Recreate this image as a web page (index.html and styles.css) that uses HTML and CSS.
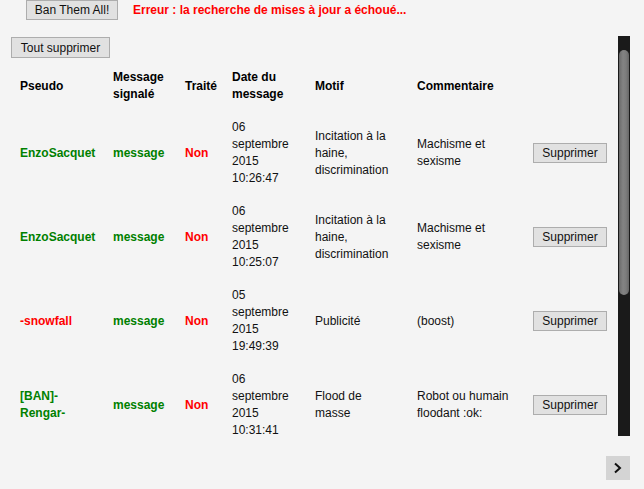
FILE: index.html
```html
<!DOCTYPE html>
<html lang="fr">
<head>
<meta charset="utf-8">
<title>Messages signalés</title>
<link rel="stylesheet" href="styles.css">
</head>
<body>
<div class="topbar">
  <button class="btn btn-ban">Ban Them All!</button>
  <span class="error">Erreur : la recherche de mises à jour a échoué...</span>
</div>
<div class="viewport">
  <div class="panel">
    <div class="actions"><button class="btn btn-all">Tout supprimer</button></div>
    <table class="reports">
      <colgroup>
        <col class="c-pseudo"><col class="c-msg"><col class="c-done"><col class="c-date"><col class="c-motif"><col class="c-comment"><col class="c-action">
      </colgroup>
      <thead>
        <tr><th>Pseudo</th><th>Message signalé</th><th>Traité</th><th>Date du message</th><th>Motif</th><th>Commentaire</th><th></th></tr>
      </thead>
      <tbody>
        <tr><td class="ok">EnzoSacquet</td><td class="ok">message</td><td class="no">Non</td><td>06 septembre 2015 10:26:47</td><td class="motif">Incitation à la haine, discrimination</td><td>Machisme et sexisme</td><td><button class="btn">Supprimer</button></td></tr>
        <tr><td class="ok">EnzoSacquet</td><td class="ok">message</td><td class="no">Non</td><td>06 septembre 2015 10:25:07</td><td class="motif">Incitation à la haine, discrimination</td><td>Machisme et sexisme</td><td><button class="btn">Supprimer</button></td></tr>
        <tr><td class="no">-snowfall</td><td class="ok">message</td><td class="no">Non</td><td>05 septembre 2015 19:49:39</td><td class="motif">Publicité</td><td>(boost)</td><td><button class="btn">Supprimer</button></td></tr>
        <tr><td class="ok">[BAN]-Rengar-</td><td class="ok">message</td><td class="no">Non</td><td>06 septembre 2015 10:31:41</td><td class="motif">Flood de masse</td><td>Robot ou humain floodant :ok:</td><td><button class="btn">Supprimer</button></td></tr>
      </tbody>
    </table>
  </div>
  <div class="scrollbar"><div class="thumb"></div></div>
</div>
<div class="pager">
  <button class="next" aria-label="Suivant"><svg width="24" height="24" viewBox="0 0 24 24"><path d="M9 7.5 L14 12 L9 16.5" fill="none" stroke="#111" stroke-width="2"/></svg></button>
</div>
</body>
</html>
```

FILE: styles.css
```css
html, body {
  margin: 0;
  background: #f4f4f4;
  font-family: "Liberation Sans", Arial, sans-serif;
  font-size: 12px;
  color: #111;
}
.btn {
  font-family: "Liberation Sans", Arial, sans-serif;
  font-size: 12px;
  color: #111;
  background: #e1e1e1;
  border: 1px solid #adadad;
  border-radius: 0;
  height: 20px;
  padding: 0 6px;
  margin: 0;
  line-height: 18px;
}
.topbar {
  display: flex;
  align-items: center;
  gap: 15px;
  padding-left: 26px;
  height: 20px;
}
.btn-ban {
  width: 92px;
  margin-top: -1px;
}
.error {
  color: #ff0000;
  font-weight: bold;
}
.viewport {
  margin-top: 16px;
  width: 630px;
  height: 400px;
  display: flex;
}
.panel {
  flex: 1;
  overflow: hidden;
  padding: 1px 0 0 11px;
}
.scrollbar {
  width: 12px;
  background: #1a1a1a;
  display: flex;
  flex-direction: column;
  padding: 14px 1px 0 1px;
  box-sizing: border-box;
}
.thumb {
  height: 245px;
  border-radius: 5px;
  background: linear-gradient(to right, #6a6a6a, #838383 40%, #7c7c7c 70%, #666);
}
.actions {
  display: flex;
}
.btn-all {
  width: 99px;
  height: 21px;
}
.reports {
  margin: 3px 0 0 1px;
  border-collapse: collapse;
  table-layout: fixed;
  width: 603px;
}
.c-pseudo { width: 93px; }
.c-msg { width: 72px; }
.c-done { width: 47px; }
.c-date { width: 83px; }
.c-motif { width: 102px; }
.c-comment { width: 116px; }
.c-action { width: 90px; }
.reports th, .reports td {
  padding: 8px;
  line-height: 17px;
  text-align: left;
  vertical-align: middle;
}
.reports td.motif {
  padding-right: 18px;
}
.reports th {
  font-weight: bold;
  color: #000;
}
.reports td {
  color: #111;
}
.reports td.ok {
  color: #008000;
  font-weight: bold;
}
.reports td.no {
  color: #ff0000;
  font-weight: bold;
}
.reports .btn {
  width: 74px;
  display: block;
}
.pager {
  width: 630px;
  display: flex;
  justify-content: flex-end;
  margin-top: 20px;
}
.next {
  width: 24px;
  height: 24px;
  padding: 0;
  border: 0;
  background: #d4d4d4;
  display: flex;
}
```
